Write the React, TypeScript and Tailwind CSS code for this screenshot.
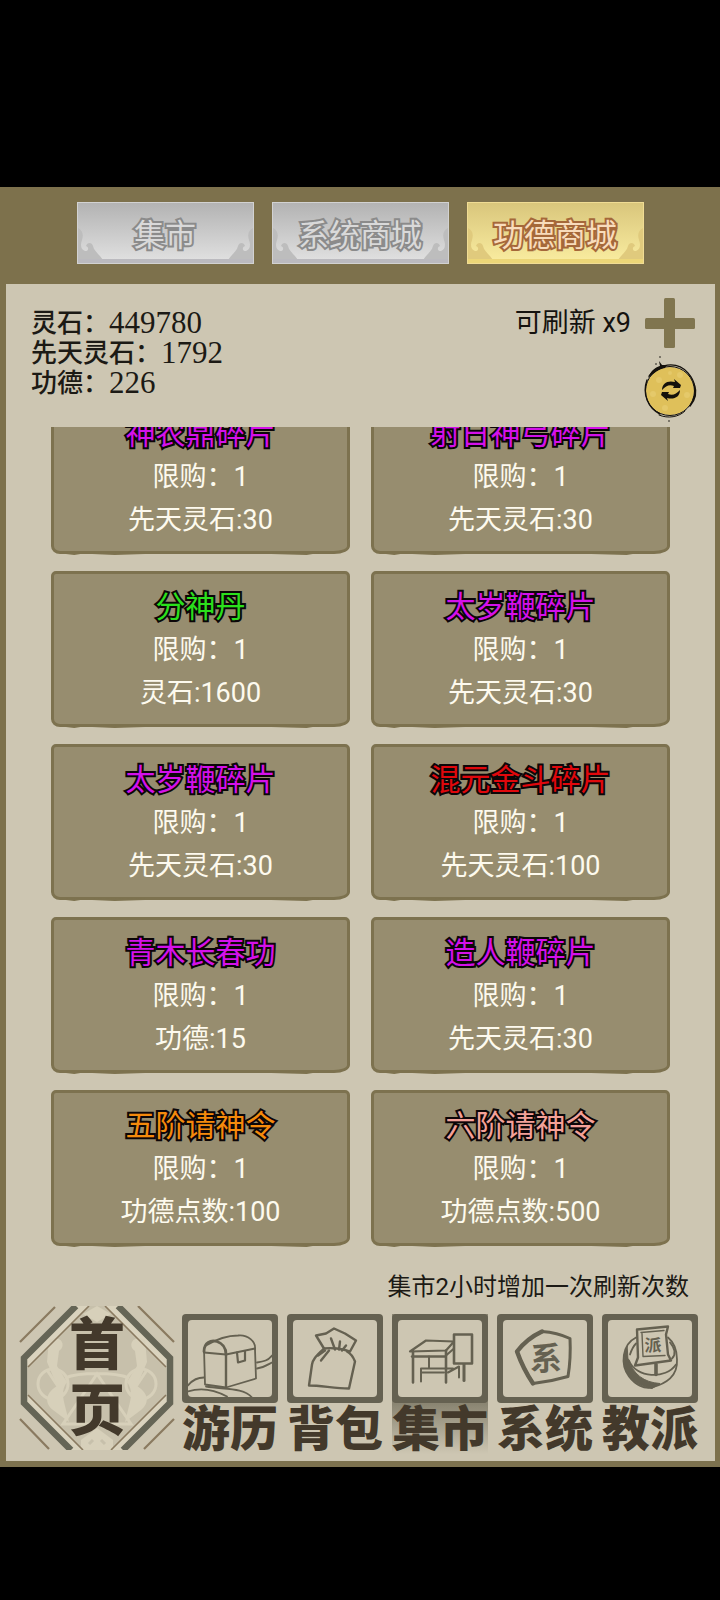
import React, { useState } from 'react';

interface Item {
  id: number;
  name: string;
  color: string;
  limit: number;
  currency: string;
  price: number;
}

const tabs = ['集市', '系统商城', '功德商城'];

const balances = [
  { label: '灵石：', value: 449780 },
  { label: '先天灵石：', value: 1792 },
  { label: '功德：', value: 226 },
];

const items: Item[] = [
  { id: 1, name: '神农鼎碎片', color: 'text-[#d411ea]', limit: 1, currency: '先天灵石', price: 30 },
  { id: 2, name: '射日神弓碎片', color: 'text-[#d411ea]', limit: 1, currency: '先天灵石', price: 30 },
  { id: 3, name: '分神丹', color: 'text-[#2be01c]', limit: 1, currency: '灵石', price: 1600 },
  { id: 4, name: '太岁鞭碎片', color: 'text-[#d411ea]', limit: 1, currency: '先天灵石', price: 30 },
  { id: 5, name: '太岁鞭碎片', color: 'text-[#d411ea]', limit: 1, currency: '先天灵石', price: 30 },
  { id: 6, name: '混元金斗碎片', color: 'text-[#e0080c]', limit: 1, currency: '先天灵石', price: 100 },
  { id: 7, name: '青木长春功', color: 'text-[#d411ea]', limit: 1, currency: '功德', price: 15 },
  { id: 8, name: '造人鞭碎片', color: 'text-[#d411ea]', limit: 1, currency: '先天灵石', price: 30 },
  { id: 9, name: '五阶请神令', color: 'text-[#f58a0c]', limit: 1, currency: '功德点数', price: 100 },
  { id: 10, name: '六阶请神令', color: 'text-[#f4a198]', limit: 1, currency: '功德点数', price: 500 },
];

const ChestIcon = () => (
  <g strokeWidth="1.8">
    <path d="M22 34 L23 70 L44 73 L74 64 L73 35" />
    <path d="M22 38 L44 40 L73 34" />
    <path d="M44 40 L44 72" strokeWidth="2.4" />
    <path d="M22 37 C22 28 29 25 35 27 C41 29 44 34 44 40" strokeWidth="2.8" />
    <path d="M24 31 C34 25 44 21 56 21 C66 20 74 27 73 35" />
    <path d="M55 38 L56 48 L63 46 L63 37" strokeWidth="2.2" />
    <path d="M75 48 C82 47 86 46 90 41 M75 54 C82 53 86 50 90 48" />
    <path d="M6 71 C10 66 15 63 22 63 M6 77 C18 73 32 75 45 82 M24 72 C42 75 62 73 70 83" />
  </g>
);

const BagIcon = () => (
  <g strokeWidth="2.4">
    <path d="M37 34 L29 21 L39 19 L47 14 L58 19 L69 26 L63 37 C56 34 44 33 37 34 Z" />
    <path d="M37 34 C30 41 26 44 25 50 L22 71 C34 71 48 74 62 74 L68 47 C66 42 64 39 60 37" />
    <path d="M44 24 L48 35 M53 27 L52 35 M59 31 L55 36 M42 36 L34 46 M38 36 L31 41" />
  </g>
);

const MarketIcon = () => (
  <g strokeWidth="2">
    <path d="M18 37 L34 26 L62 27 L54 36 Z" strokeWidth="2.2" />
    <path d="M20 42 H54 M21 37 V68 M54 36 V68" strokeWidth="2.6" />
    <path d="M37 42 V54 M29 67 V54 H61 M29 58 H52 M54 41 L62 34 M56 58 L67 52 V63" />
    <path d="M62 20 H80 V49 H62 Z" strokeWidth="2.6" />
    <path d="M72 50 V66" strokeWidth="3" />
  </g>
);

const SystemIcon = () => (
  <g>
    <path d="M45 17 Q60 18 73 24 Q74 44 71 62 Q54 67 36 69 Q26 54 20 37 Q30 24 45 17 Z" strokeWidth="3" />
    <path d="M45 17 Q30 24 20 37 Q26 54 36 69" strokeWidth="4.4" />
    <text x="49" y="55" fontSize="32" fontWeight="700" textAnchor="middle" fill="#656151" stroke="none">
      系
    </text>
  </g>
);

const SectIcon = () => (
  <g strokeWidth="1.8">
    <path d="M34 23 C20 30 18 50 27 62 C33 70 42 75 50 73 C64 69 76 62 75 45 C75 35 72 28 66 23" />
    <path d="M25 32 C17 52 26 70 50 74 L58 69 C42 68 31 60 26 44 Z" fill="#656151" strokeWidth="1" />
    <path d="M27 46 C34 64 64 65 74 50" />
    <path d="M28 40 C30 34 31 32 34 29 M68 28 C73 34 74 40 70 44" />
    <path d="M35 15 L66 12 L64 20 L66 40 L69 46 L33 51 L36 43 Z" strokeWidth="2.4" fill="#cdc6b2" />
    <path d="M39 18 L62 16 M40 19 L41 42 L63 41" strokeWidth="1.4" />
    <path d="M54 50 V60" strokeWidth="3.6" />
    <text x="51" y="36" fontSize="17" fontWeight="700" textAnchor="middle" fill="#656151" stroke="none">
      派
    </text>
  </g>
);

const navItems = [
  { label: '游历', icon: <ChestIcon /> },
  { label: '背包', icon: <BagIcon /> },
  { label: '集市', icon: <MarketIcon /> },
  { label: '系统', icon: <SystemIcon /> },
  { label: '教派', icon: <SectIcon /> },
];

const TabCloud = ({ className }: { className: string }) => (
  <svg viewBox="0 0 26 32" className={className} fill="currentColor" aria-hidden="true">
    <path d="M0 0 C4 2 6 6 4 12 C2 17 3 22 7 23 C11 23 11 19 8 18 C9 14 14 14 15 18 C16 23 21 26 25 32 L0 32 Z" />
  </svg>
);

const Tab = ({ label, active, onClick }: { label: string; active: boolean; onClick: () => void }) => {
  const cloud = active ? 'text-[#e0ca7d]' : 'text-[#bdbdbd]';
  return (
    <button
      type="button"
      role="tab"
      aria-selected={active}
      onClick={onClick}
      className={`relative h-[62px] max-w-[177px] flex-1 border pt-1 text-[31px] leading-none [paint-order:stroke_fill] ${
        active
          ? 'border-[#f0dc94] bg-linear-to-b from-[#d9c67c] to-[#faeda0] text-[#f8dcbc] [-webkit-text-stroke:4px_#a5683a]'
          : 'border-[#d2d2d2] bg-linear-to-b from-[#b3b3b3] to-[#e2e2e2] text-[#d9d9d9] [-webkit-text-stroke:4px_#8b8b8b]'
      }`}
    >
      <TabCloud className={`absolute bottom-[3px] left-0 h-8 w-[26px] ${cloud}`} />
      <TabCloud className={`absolute right-0 bottom-[3px] h-8 w-[26px] -scale-x-100 ${cloud}`} />
      <span className={`absolute inset-x-0 bottom-0 h-1 ${active ? 'bg-[#ecd678]' : 'bg-[#bbbabf]'}`} />
      <span className="relative">{label}</span>
    </button>
  );
};

const ItemCard = ({ item }: { item: Item }) => (
  <button
    type="button"
    className="relative flex h-[156px] flex-col items-center rounded-[5px_5px_16px_9px/5px_5px_8px_8px] border-[3px] border-[#7d724f] bg-[#978d6f] pt-[11px] text-[27px] leading-[43px] text-[#fdfaee]"
  >
    <span
      className={`text-[30px] leading-[44px] [-webkit-text-stroke:4px_#0c0608] [paint-order:stroke_fill] ${item.color}`}
    >
      {item.name}
    </span>
    <span>限购：{item.limit}</span>
    <span>
      {item.currency}:{item.price}
    </span>
    {/* rough ink edge along the bottom */}
    <svg
      viewBox="0 0 290 6"
      preserveAspectRatio="none"
      className="absolute inset-x-0 -bottom-1 h-[6px] w-full"
      fill="none"
      stroke="#7d724f"
      strokeWidth="2"
      aria-hidden="true"
    >
      <path d="M12 4 L20 5 L26 4 L38 4 L60 5 L90 4 L120 4 L150 4 L185 4 L215 4 L250 5 L262 3" />
    </svg>
  </button>
);

const RefreshIcon = () => (
  <svg viewBox="0 0 70 76" className="h-[76px] w-[70px]" aria-hidden="true">
    <circle cx="35" cy="41" r="24" fill="#dfc05a" />
    <g fill="#e9cf75" opacity="0.6">
      <circle cx="24" cy="30" r="3" />
      <circle cx="45" cy="25" r="3" />
      <circle cx="52" cy="45" r="3" />
      <circle cx="30" cy="58" r="3" />
      <circle cx="18" cy="44" r="3" />
      <circle cx="35" cy="23" r="2" />
    </g>
    <g fill="none" stroke="#14110c" strokeLinecap="round">
      <circle cx="35" cy="41" r="24.5" strokeWidth="1" />
      <path d="M14 26 C22 14 42 10 53 23 C60 31 62 40 58 50" strokeWidth="1.2" />
      <path d="M12 30 C7 44 13 58 25 64" strokeWidth="1.4" />
      <path d="M59 34 C62 42 60 50 55 56" strokeWidth="1.6" />
      <path d="M24 65 C33 69 44 67 50 61" strokeWidth="1" />
    </g>
    <path d="M13 28 C16 20 21 17 25 16 L24 11 L27 15 L32 15 L30 18 C24 19 19 23 13 28 Z" fill="#14110c" />
    <g fill="#14110c">
      <circle cx="25" cy="7" r="0.8" />
      <circle cx="21" cy="14" r="0.8" />
      <circle cx="34" cy="71" r="0.8" />
      <path id="arrow" d="M27 40 C27 33 33 30 40 32 L39 29 L46 35 L45 38 L38 38 L39 36 C34 34 31 36 27 40 Z" />
      <use href="#arrow" transform="rotate(180 36 40)" />
    </g>
  </svg>
);

const HomeBadge = () => (
  <svg viewBox="0 0 156 144" className="h-[144px] w-[156px]" fill="none" aria-hidden="true">
    <path d="M5 52 L56 0 H100 L151 52 V97 L104 144 H52 L5 97 Z" fill="#dad3be" />
    <path d="M9 61 L70 0 H86 L147 61 V89 L92 144 H64 L9 89 Z" fill="#c7c0ab" />
    <g stroke="#d7d0ba" strokeWidth="3">
      <path d="M46 72 C60 66 96 66 110 72 M78 68 L44 118 H112 Z" />
      <circle cx="34" cy="78" r="15" />
      <circle cx="122" cy="78" r="15" />
      <path d="M28 64 L44 88 M128 64 L112 88" />
    </g>
    <g fill="#d7d0ba">
      <path d="M30 34 C42 28 48 40 40 45 L38 60 L48 76 C42 84 44 92 46 100 L50 116 L34 104 C24 96 28 86 38 80 L28 56 Z" />
      <path d="M126 34 C114 28 108 40 116 45 L118 60 L108 76 C114 84 112 92 110 100 L106 116 L122 104 C132 96 128 86 118 80 L128 56 Z" />
      <path d="M62 134 L78 122 L94 134 V144 H62 Z" />
      <path d="M64 8 L78 0 L92 8 L78 16 Z" />
    </g>
    <path d="M70 138 L74 134 M86 138 L82 134" stroke="#c7c0ab" strokeWidth="3" />
    <g stroke="#8a7a60" strokeWidth="1.6">
      <path d="M9 61 L70 0 M147 61 L86 0 M9 89 L64 144 M147 89 L92 144" />
      <path d="M1 36 L36 1 M155 36 L119 0 M1 113 L30 143 M155 113 L125 143" strokeWidth="2.2" />
    </g>
    <path d="M57 0 L5 52 V97 L52 144 M99 0 L151 52 V97 L104 144" stroke="#656556" strokeWidth="6.5" />
  </svg>
);

const App = () => {
  const [activeTab, setActiveTab] = useState('功德商城');
  const [activeNav, setActiveNav] = useState('集市');

  return (
    <div className="min-h-screen bg-black pt-[187px] font-[Roboto,'Noto_Sans_CJK_SC',sans-serif]">
      <main className="border-b-[6px] border-[#7d724f] bg-[#7d714c]">
        <div role="tablist" className="flex h-[97px] justify-center gap-[18px] px-4 pt-[15px]">
          {tabs.map((tab) => (
            <Tab key={tab} label={tab} active={tab === activeTab} onClick={() => setActiveTab(tab)} />
          ))}
        </div>

        <div className="mr-[5px] ml-[6px] bg-[#cdc6b2] pb-1">
          {/* Balances and refresh */}
          <div className="flex h-[143px] justify-between pr-[10px] pl-[25px]">
            <dl className="pt-6 text-[26px] leading-[30px] text-[#1c1a15]">
              {balances.map((balance) => (
                <div key={balance.label} className="flex items-center">
                  <dt className="font-medium">{balance.label}</dt>
                  <dd className="font-['Liberation_Serif',serif] text-[31px]">{balance.value}</dd>
                </div>
              ))}
            </dl>
            <div className="flex flex-col items-end">
              <div className="flex items-center gap-[14px] pt-[14px] pr-[10px] text-[27px] text-[#15130f]">
                <span>可刷新 x9</span>
                <button type="button" aria-label="增加刷新次数">
                  <svg viewBox="0 0 50 50" className="size-[50px]" fill="#80754f" aria-hidden="true">
                    <rect x="19" y="0" width="11" height="50" rx="1.5" />
                    <rect x="0" y="20" width="50" height="11" rx="1.5" />
                  </svg>
                </button>
              </div>
              <button type="button" aria-label="刷新" className="pt-[2px]">
                <RefreshIcon />
              </button>
            </div>
          </div>

          {/* Items, first row scrolled partly out of view */}
          <div className="overflow-hidden px-[45px]">
            <div className="-mt-[29px] grid grid-cols-2 gap-x-[21px] gap-y-[17px] pb-1">
              {items.map((item) => (
                <ItemCard key={item.id} item={item} />
              ))}
            </div>
          </div>

          <p className="mt-[19px] pr-[26px] text-right text-[24px] leading-9 text-[#1c1a15]">
            集市2小时增加一次刷新次数
          </p>

          {/* Bottom navigation */}
          <nav className="mt-px flex items-start justify-between pr-[17px] pl-[13px]">
            <button type="button" className="relative">
              <HomeBadge />
              <span className="absolute inset-0 flex flex-col items-center justify-center text-[56px] leading-[66px] font-black text-[#43392b]">
                <span>首</span>
                <span>页</span>
              </span>
            </button>
            <div className="flex gap-[9px] pt-2">
              {navItems.map((item) => (
                <button
                  key={item.label}
                  type="button"
                  aria-current={item.label === activeNav ? 'page' : undefined}
                  onClick={() => setActiveNav(item.label)}
                  className={`flex w-24 flex-col items-center ${
                    item.label === activeNav
                      ? 'bg-[linear-gradient(#8a8572_90px,#cdc6b2_140px)]'
                      : ''
                  }`}
                >
                  <span className="h-[89px] w-full rounded-[4px] bg-[#656151] p-[6px]">
                    <svg
                      viewBox="6 6 84 76"
                      className="h-full w-full rounded-[4px] bg-[#cdc6b2]"
                      fill="none"
                      stroke="#656151"
                      strokeLinecap="round"
                      strokeLinejoin="round"
                      aria-hidden="true"
                    >
                      {item.icon}
                    </svg>
                  </span>
                  <span className="text-[48px] leading-[54px] font-black whitespace-nowrap text-[#43392b]">
                    {item.label}
                  </span>
                </button>
              ))}
            </div>
          </nav>
        </div>
      </main>
    </div>
  );
};

export default App;
